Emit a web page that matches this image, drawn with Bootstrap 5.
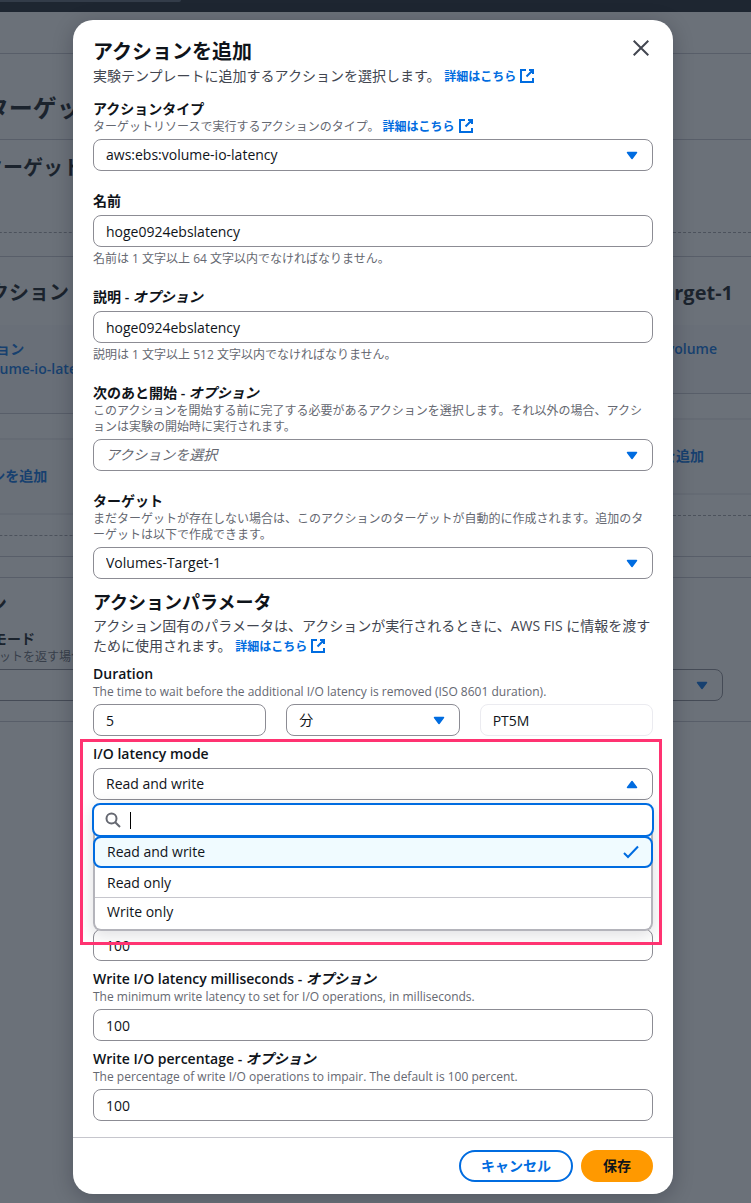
<!DOCTYPE html>
<html lang="ja">
<head>
<meta charset="utf-8">
<meta name="viewport" content="width=device-width, initial-scale=1">
<title>アクションを追加</title>
<link href="https://cdn.jsdelivr.net/npm/bootstrap@5.3.0/dist/css/bootstrap.min.css" rel="stylesheet">
<style>
  :root { --ink: #0f141a; --soft: #424650; --hint: #656871; --blue: #006ce0; --line: #8c8c94; }
  body { font-family: "Open Sans", "Noto Sans CJK JP", sans-serif; font-size: 14px; line-height: 20px; color: var(--ink); line-break: loose; }
  a { color: var(--blue); text-decoration: none; font-weight: 600; }
  h1, h2, h3 { font-weight: 700; margin: 0; }

  .stage { display: grid; grid-template-columns: minmax(0, 1fr); min-height: 100vh; }
  .stage > * { grid-area: 1 / 1; }

  /* page behind the dialog */
  .console { overflow: hidden; white-space: nowrap; background: #fff; }
  .console-top { height: 12px; background: #161d26; }
  .console-search { width: 181px; height: 2px; background: #55606e; border-radius: 0 0 4px 0; }
  .console-crumb { height: 42px; border-bottom: 1px solid #c6c6cd; }
  .console-main { margin-left: -158px; }
  .console-head { padding: 38px 0 15px; font-size: 24px; line-height: 32px; }
  .pane { border: solid #c6c6cd; border-width: 1px 0; padding: 16px 20px 20px 22px; }
  .pane h2 { font-size: 20px; line-height: 24px; }
  .canvas { margin: 52px -20px 0; border-top: 1px dashed #a0a0a8; padding-top: 23px; }
  .node { border: solid #c6c6cd; border-width: 1px 0; padding-top: 24px; }
  .node h3 { font-size: 20px; line-height: 24px; }
  .node-links { background: #f8f8fa; margin-top: 20px; padding: 14px 0 34px; }
  .node-add { margin-top: 24px; border: solid #ebebf0; border-width: 2px 0; padding: 26px 0 27px; background: #fbfbfc; }
  .node-end { border-top: 1px dashed #a0a0a8; margin-top: 20px; }
  .col-act h3 { padding-left: 126px; }
  .col-act .node-links { padding-left: 78px; }
  .col-act .node-links a:first-child { padding-left: 33px; }
  .col-act .node-add { padding-left: 92px; }
  .col-tgt h3 { padding-right: 18px; }
  .col-tgt .node-links { padding-right: 34px; }
  .col-tgt .node-add { padding-right: 47px; }
  .pane-opt { margin-top: 20px; padding: 15px 28px 20px 25px; }
  .pane-opt h2 { margin-bottom: 12px; }

  /* dialog */
  .overlay { background: rgba(35, 43, 55, .67); padding: 20px 5px 10px 0; }
  .dialog { max-width: 600px; border-radius: 20px; box-shadow: 0 4px 20px 1px rgba(0, 7, 22, .22); }
  .dialog-head { padding: 20px 20px 13px; }
  .dialog-title { font-size: 20px; line-height: 24px; }
  .section-title { font-size: 18px; line-height: 23px; }
  .lede { color: var(--soft); margin: 2px 0 0; }
  .more { font-size: 12px; line-height: 16px; }
  .more svg { vertical-align: middle; margin: -6px 0 -3px; }
  .lbl { display: block; font-weight: 600; line-height: 20px; }
  .help { color: var(--hint); font-size: 12px; line-height: 16px; }
  .form-control, .form-select { height: 32px; padding: 0 12px; font-size: 14px; line-height: 20px; color: var(--ink); border: 1px solid var(--line); border-radius: 8px; }
  .form-select { padding-right: 36px; background-size: 12px 9px; background-position: right 14px center;
    background-image: url("data:image/svg+xml,%3Csvg xmlns='http://www.w3.org/2000/svg' viewBox='0 0 12 9'%3E%3Cpath d='M1.5 1.5h9L6 7.5z' fill='%23006ce0' stroke='%23006ce0' stroke-width='1.5' stroke-linejoin='round'/%3E%3C/svg%3E"); }
  .form-select.is-open { background-image: url("data:image/svg+xml,%3Csvg xmlns='http://www.w3.org/2000/svg' viewBox='0 0 12 9'%3E%3Cpath d='M1.5 7.5h9L6 1.5z' fill='%23006ce0' stroke='%23006ce0' stroke-width='1.5' stroke-linejoin='round'/%3E%3C/svg%3E"); }
  .form-select.is-empty { color: var(--hint); font-style: italic; }
  .form-control:read-only { border-color: #ebebf0; }
  .stack-lg { display: flex; flex-direction: column; gap: 20px; }
  .stack-sm { display: flex; flex-direction: column; gap: 8px; }
  .trio { display: grid; grid-template-columns: repeat(3, minmax(0, 1fr)); gap: 20px; }
  .close-x { border: 0; background: none; padding: 0; color: var(--soft); }

  .marker { inset: -5px -9px 16px -13px; border: 3px solid #ff3371; z-index: 3; pointer-events: none; }
  .menu { margin: 3px 0 -2px; z-index: 2; border-radius: 8px; box-shadow: 0 4px 16px 1px rgba(0, 7, 22, .12); }
  .menu-search { height: 34px; margin: 0 -1px; border: 2px solid var(--blue); border-radius: 8px; padding: 0 11px; z-index: 1; gap: 9px; }
  .menu-search input { border: 0; outline: 0; min-width: 0; background: none; caret-color: transparent; }
  .cursor { width: 1px; height: 17px; background: #000; }
  .menu-list { list-style: none; margin: -9px 0 0; padding: 8px 0 3px; border: 2px solid #b4b4bb; border-top: 0; border-radius: 0 0 8px 8px; }
  .menu-item { height: 29px; padding: 0 12px; }
  .menu-item + .menu-item + .menu-item { border-top: 1px solid #c6c6cd; }
  .menu-item.is-active { height: 32px; margin: 0 -2px; border: 2px solid var(--blue); border-radius: 8px; background: #f0fbff; }
  .foot { border-top: 1px solid #c6c6cd; padding: 12px 20px; margin-top: 16px; }
  .foot .btn { height: 32px; padding: 0 20px; border: 2px solid var(--blue); border-radius: 20px; font-size: 14px; font-weight: 600; line-height: 20px; color: var(--blue); }
  .foot .btn-save { background: #ff9900; border-color: #ff9900; color: var(--ink); }
</style>
</head>
<body>
<svg width="0" height="0" class="position-absolute" aria-hidden="true">
  <symbol id="ext" viewBox="0 0 16 16"><path d="M7 2H2v12h12V10M10 2h4v4M14 2 7.500 8.500" fill="none" stroke="currentColor" stroke-width="2"/></symbol>
</svg>
<div class="stage">
  <div class="console" aria-hidden="true">
    <div class="console-top"><div class="console-search"></div></div>
    <div class="console-crumb"></div>
    <div class="console-main">
      <h1 class="console-head">アクションとターゲット</h1>
      <section class="pane">
        <h2>アクションとターゲット</h2>
        <div class="canvas d-flex align-items-start">
          <div class="col-act w-50">
            <div class="node">
              <h3>アクション</h3>
              <div class="node-links"><a href="#" class="d-block">アクション</a><a href="#" class="d-block">aws:ebs:volume-io-latency</a></div>
            </div>
            <div class="node-add"><a href="#">アクションを追加</a></div><div class="node-end"></div>
          </div>
          <div class="col-tgt w-50 text-end">
            <div class="node">
              <h3>Volumes-Target-1</h3>
              <div class="node-links"><a href="#">aws:ec2:ebs-volume</a></div>
            </div>
            <div class="node-add"><a href="#">ターゲットを追加</a></div><div class="node-end"></div>
          </div>
        </div>
      </section>
      <section class="pane pane-opt">
        <h2>実験オプション</h2>
        <div class="lbl">空のターゲット解決モード</div>
        <div class="help mb-1">ターゲット解決が空のセットを返す場合</div>
        <select class="form-select"><option></option></select>
      </section>
    </div>
  </div>

  <div class="overlay">
    <main class="dialog bg-white mx-auto" role="dialog" aria-labelledby="dlg-title">
      <header class="dialog-head d-flex justify-content-between align-items-start">
        <div>
          <h1 class="dialog-title" id="dlg-title">アクションを追加</h1>
          <p class="lede">実験テンプレートに追加するアクションを選択します。 <a class="more" href="#">詳細はこちら <svg width="16" height="16"><use href="#ext"/></svg></a></p>
        </div>
        <button class="close-x me-1" type="button" aria-label="閉じる"><svg class="d-block" width="16" height="16" viewBox="0 0 16 16"><path d="M.7.7l14.600 14.600M15.300.7.7 15.300" stroke="currentColor" stroke-width="2"/></svg></button>
      </header>

      <form class="px-3 mx-1">
        <div class="stack-lg">
          <div>
            <label class="lbl" for="type">アクションタイプ</label>
            <div class="help mb-1">ターゲットリソースで実行するアクションのタイプ。 <a class="more" href="#">詳細はこちら <svg width="16" height="16"><use href="#ext"/></svg></a></div>
            <select class="form-select" id="type"><option>aws:ebs:volume-io-latency</option></select>
          </div>
          <div>
            <label class="lbl mb-1" for="name">名前</label>
            <input class="form-control mb-1" id="name" value="hoge0924ebslatency">
            <div class="help">名前は 1 文字以上 64 文字以内でなければなりません。</div>
          </div>
          <div>
            <label class="lbl mb-1" for="desc">説明 - <em>オプション</em></label>
            <input class="form-control mb-1" id="desc" value="hoge0924ebslatency">
            <div class="help">説明は 1 文字以上 512 文字以内でなければなりません。</div>
          </div>
          <div>
            <label class="lbl" for="after">次のあと開始 - <em>オプション</em></label>
            <div class="help mb-1">このアクションを開始する前に完了する必要があるアクションを選択します。それ以外の場合、アクションは実験の開始時に実行されます。</div>
            <select class="form-select is-empty" id="after"><option>アクションを選択</option></select>
          </div>
          <div>
            <label class="lbl" for="target">ターゲット</label>
            <div class="help mb-1">まだターゲットが存在しない場合は、このアクションのターゲットが自動的に作成されます。追加のターゲットは以下で作成できます。</div>
            <select class="form-select" id="target"><option>Volumes-Target-1</option></select>
          </div>
        </div>

        <div class="mt-2 pt-1 mb-2">
          <h2 class="section-title">アクションパラメータ</h2>
          <p class="lede">アクション固有のパラメータは、アクションが実行されるときに、AWS FIS に情報を渡すために使用されます。 <a class="more" href="#">詳細はこちら <svg width="16" height="16"><use href="#ext"/></svg></a></p>
        </div>

        <div class="stack-sm">
          <div>
            <label class="lbl" for="dur">Duration</label>
            <div class="help mb-1">The time to wait before the additional I/O latency is removed (ISO 8601 duration).</div>
            <div class="trio">
              <input class="form-control" id="dur" value="5">
              <select class="form-select" aria-label="単位"><option>分</option></select>
              <input class="form-control" aria-label="ISO 8601" value="PT5M" readonly>
            </div>
          </div>
          <div class="position-relative">
            <div class="marker position-absolute"></div>
            <label class="lbl mb-1" for="mode">I/O latency mode</label>
            <select class="form-select is-open" id="mode"><option>Read and write</option></select>
            <div class="menu position-relative bg-white">
              <div class="menu-search position-relative bg-white d-flex align-items-center">
                <svg width="16" height="16" viewBox="0 0 16 16" fill="none" stroke="#656871" stroke-width="2"><circle cx="6.500" cy="6.500" r="5"/><path d="m10.200 10.200 4.800 4.800"/></svg>
                <span class="cursor"></span>
                <input class="flex-grow-1" type="text" aria-label="検索">
              </div>
              <ul class="menu-list bg-white" role="listbox">
                <li class="menu-item is-active d-flex align-items-center justify-content-between" role="option" aria-selected="true">Read and write <svg width="16" height="16" viewBox="0 0 16 16" fill="none" stroke="#006ce0" stroke-width="2"><path d="m1 9 4 4L15 2.500"/></svg></li>
                <li class="menu-item d-flex align-items-center" role="option">Read only</li>
                <li class="menu-item d-flex align-items-center" role="option">Write only</li>
              </ul>
            </div>
            <input class="form-control" aria-label="Read I/O percentage" value="100">
          </div>
          <div>
            <label class="lbl" for="wms">Write I/O latency milliseconds - <em>オプション</em></label>
            <div class="help mb-1">The minimum write latency to set for I/O operations, in milliseconds.</div>
            <input class="form-control" id="wms" value="100">
          </div>
          <div>
            <label class="lbl" for="wpc">Write I/O percentage - <em>オプション</em></label>
            <div class="help mb-1">The percentage of write I/O operations to impair. The default is 100 percent.</div>
            <input class="form-control" id="wpc" value="100">
          </div>
        </div>
      </form>
      <footer class="foot d-flex justify-content-end gap-2">
        <button class="btn" type="button">キャンセル</button>
        <button class="btn btn-save" type="button">保存</button>
      </footer>
    </main>
  </div>
</div>
<script src="https://cdn.jsdelivr.net/npm/bootstrap@5.3.0/dist/js/bootstrap.bundle.min.js"></script>
</body>
</html>
